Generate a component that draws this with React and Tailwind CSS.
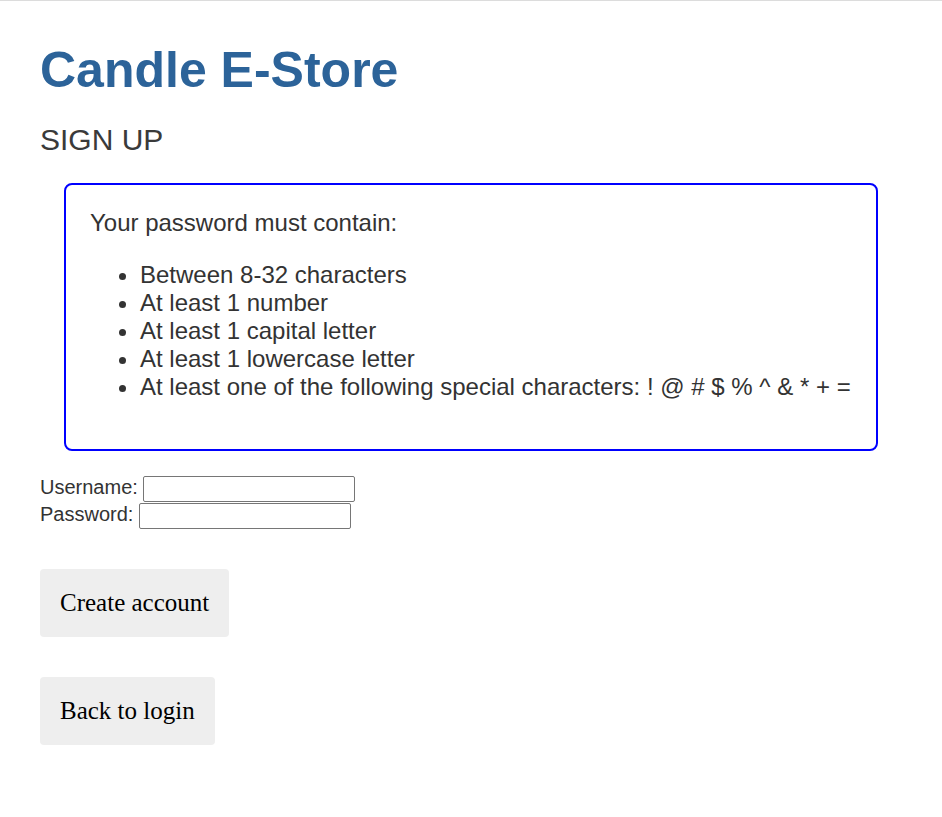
import React from 'react'

export default function App() {
  const rules = [
    'Between 8-32 characters',
    'At least 1 number',
    'At least 1 capital letter',
    'At least 1 lowercase letter',
    'At least one of the following special characters: ! @ # $ % ^ & * + =',
  ]

  return (
    <div className="min-h-screen bg-white border-t border-[#dcdcdc] px-10 pb-10 font-['Liberation_Sans',Arial,sans-serif] text-[#333333]">
      <h1 className="mt-[41px] text-[50px] leading-[57px] font-bold text-[#2c6399]">Candle E-Store</h1>
      <h2 className="mt-[24px] text-[30px] leading-[34px] text-[#3a3a3a]">SIGN UP</h2>

      {/* Password rules */}
      <div className="mx-6 mt-[26px] rounded-lg border-2 border-[#0000ff] px-6 pt-6 pb-6 text-[24px] leading-7">
        <p>Your password must contain:</p>
        <ul className="mt-6 mb-6 list-disc pl-[50px]">
          {rules.map((r) => (
            <li key={r}>{r}</li>
          ))}
        </ul>
      </div>

      {/* Form */}
      <div className="mt-[25px] text-[20px]">
        <div className="flex h-[27px] items-start">
          <label className="leading-[23px]">Username:</label>
          <input type="text" className="ml-[5px] h-[26px] w-[212px] rounded-[2px] border border-[#767676] bg-white px-1 outline-none" />
        </div>
        <div className="flex h-[27px] items-start">
          <label className="leading-[23px]">Password:</label>
          <input type="password" className="ml-[6px] h-[26px] w-[212px] rounded-[2px] border border-[#767676] bg-white px-1 outline-none" />
        </div>
      </div>

      <div className="mt-[39px] flex flex-col items-start gap-10 font-['Liberation_Serif','Times_New_Roman',serif] text-black">
        <button className="flex h-[68px] items-center rounded bg-[#eeeeee] px-5 text-[25px]">Create account</button>
        <button className="flex h-[68px] items-center rounded bg-[#eeeeee] px-5 text-[25px]">Back to login</button>
      </div>
    </div>
  )
}
